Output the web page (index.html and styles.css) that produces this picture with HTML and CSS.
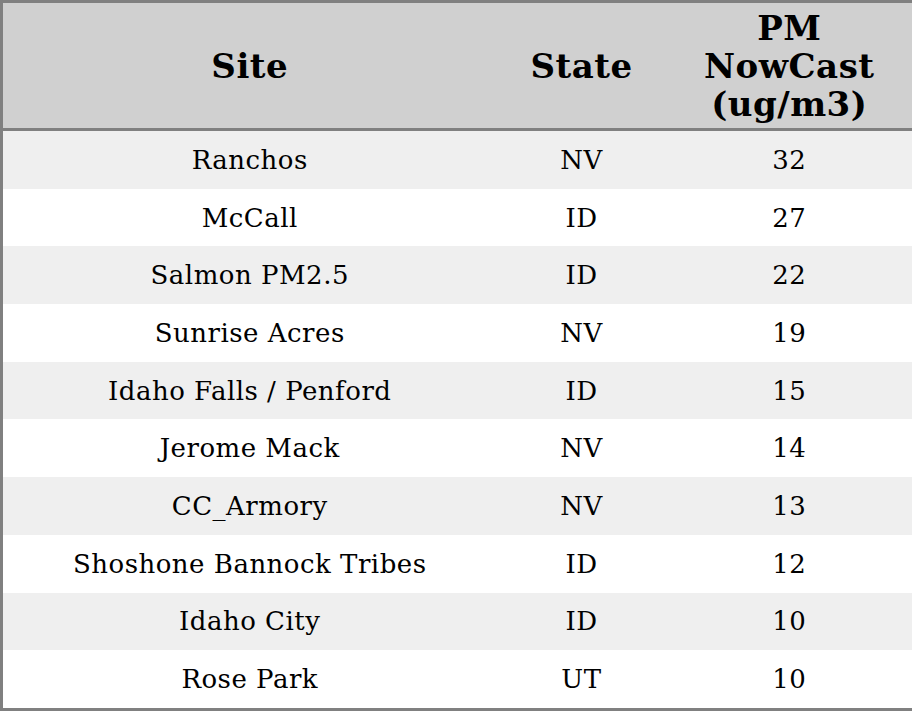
FILE: index.html
```html
<!DOCTYPE html>
<html>
<head>
<meta charset="utf-8">
<link rel="stylesheet" href="styles.css">
</head>
<body>
<table class="aq">
  <colgroup>
    <col class="c-site">
    <col class="c-state">
    <col class="c-pm">
  </colgroup>
  <thead>
    <tr><th>Site</th><th>State</th><th>PM<br>NowCast<br>(ug/m3)</th></tr>
  </thead>
  <tbody>
    <tr><td>Ranchos</td><td>NV</td><td>32</td></tr>
    <tr><td>McCall</td><td>ID</td><td>27</td></tr>
    <tr><td>Salmon PM2.5</td><td>ID</td><td>22</td></tr>
    <tr><td>Sunrise Acres</td><td>NV</td><td>19</td></tr>
    <tr><td>Idaho Falls / Penford</td><td>ID</td><td>15</td></tr>
    <tr><td>Jerome Mack</td><td>NV</td><td>14</td></tr>
    <tr><td>CC_Armory</td><td>NV</td><td>13</td></tr>
    <tr><td>Shoshone Bannock Tribes</td><td>ID</td><td>12</td></tr>
    <tr><td>Idaho City</td><td>ID</td><td>10</td></tr>
    <tr><td>Rose Park</td><td>UT</td><td>10</td></tr>
  </tbody>
</table>
</body>
</html>
```
FILE: styles.css
```css
html, body {
  margin: 0;
  padding: 0;
  background: #ffffff;
}
.aq {
  width: 912px;
  border-collapse: collapse;
  table-layout: fixed;
  border: 3px solid #808080;
  font-family: "DejaVu Serif", serif;
  color: #000;
}
.c-site { width: 495px; }
.c-state { width: 170px; }
.c-pm { width: 247px; }
.aq th {
  background: #d0d0d0;
  font-size: 34px;
  font-weight: bold;
  line-height: 38px;
  letter-spacing: 0.5px;
  height: 125px;
  padding: 0;
  text-align: center;
  vertical-align: middle;
  border-bottom: 3px solid #808080;
}
.aq td {
  font-size: 26px;
  letter-spacing: 0.5px;
  height: 57.7px;
  padding: 0;
  text-align: center;
  vertical-align: middle;
}
.aq tbody tr:nth-child(odd) td { background: #efefef; }
.aq tbody tr:nth-child(even) td { background: #ffffff; }
```
